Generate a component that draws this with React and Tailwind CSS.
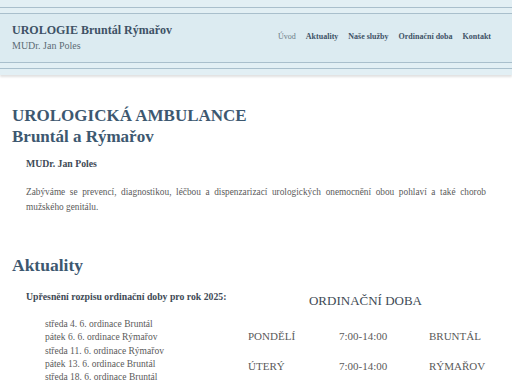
const nav = ["Úvod", "Aktuality", "Naše služby", "Ordinační doba", "Kontakt"]

const news = [
  "středa 4. 6. ordinace Bruntál",
  "pátek 6. 6. ordinace Rýmařov",
  "středa 11. 6. ordinace Rýmařov",
  "pátek 13. 6. ordinace Bruntál",
  "středa 18. 6. ordinace Bruntál",
]

const hours = [
  ["PONDĚLÍ", "7:00-14:00", "BRUNTÁL"],
  ["ÚTERÝ", "7:00-14:00", "RÝMAŘOV"],
]

const App = () => (
  <div className="h-[384px] overflow-hidden bg-white font-[family-name:Liberation_Serif,serif] text-[#5a5a5a]">
    <header className="bg-[#e2eff4] pt-[7px] pb-[6px] shadow-[0_2px_2px_rgba(0,0,0,0.12)]">
      <div className="border-y border-[#a9bfcc] h-[7px]" />
      <div className="flex items-start justify-between h-[48px] px-3 bg-[#dcebf1]">
        <div className="pt-[9px]">
          <div className="text-[12px] leading-[15px] font-bold text-[#3e5266]">UROLOGIE Bruntál Rýmařov</div>
          <div className="text-[10px] leading-[13px] mt-[1px] text-[#5d6b75]">MUDr. Jan Poles</div>
        </div>
        <nav className="flex gap-[10px] text-[8px] leading-[10px] font-bold text-[#3e5266] pr-[9px] pt-[18px]">
          {nav.map((n, i) => (
            <span key={n} className={i === 0 ? "font-normal text-[#6b7b86]" : ""}>{n}</span>
          ))}
        </nav>
      </div>
      <div className="border-y border-[#a9bfcc] h-[7px]" />
    </header>

    <main className="px-3 pt-[30px]">
      <h1 className="text-[17px] leading-[21px] font-bold text-[#3d5870]">
        UROLOGICKÁ AMBULANCE
        <br />
        Bruntál a Rýmařov
      </h1>
      <div className="px-[14px]">
        <p className="mt-[10px] text-[9.75px] leading-[14px] font-bold text-[#3e4a55]">MUDr. Jan Poles</p>
        <p className="mt-[14px] text-[9.3px] leading-[15px] text-justify">
          Zabýváme se prevencí, diagnostikou, léčbou a dispenzarizací urologických onemocnění obou pohlaví a také chorob mužského genitálu.
        </p>
      </div>

      <h2 className="mt-[40px] text-[17.5px] leading-[21px] font-bold text-[#3d5870]">Aktuality</h2>

      <div className="flex mt-[14px]">
        <div className="w-[236px] pl-[14px]">
          <p className="text-[9.75px] leading-[14px] font-bold text-[#3e4a55]">Upřesnění rozpisu ordinační doby pro rok 2025:</p>
          <ul className="mt-[14px] pl-[19px] text-[9.5px] leading-[13.3px]">
            {news.map((n) => (
              <li key={n}>{n}</li>
            ))}
          </ul>
        </div>
        <div className="w-[235px]">
          <h3 className="mt-[3px] text-center text-[13px] leading-4 text-[#3e4a55]">ORDINAČNÍ DOBA</h3>
          <div className="mt-[12px] text-[11px]">
            {hours.map(([d, t, p]) => (
              <div key={d} className="grid grid-cols-[91px_90px_1fr] items-center h-[30px]">
                <span>{d}</span>
                <span>{t}</span>
                <span>{p}</span>
              </div>
            ))}
          </div>
        </div>
      </div>
    </main>
  </div>
)

export default App
